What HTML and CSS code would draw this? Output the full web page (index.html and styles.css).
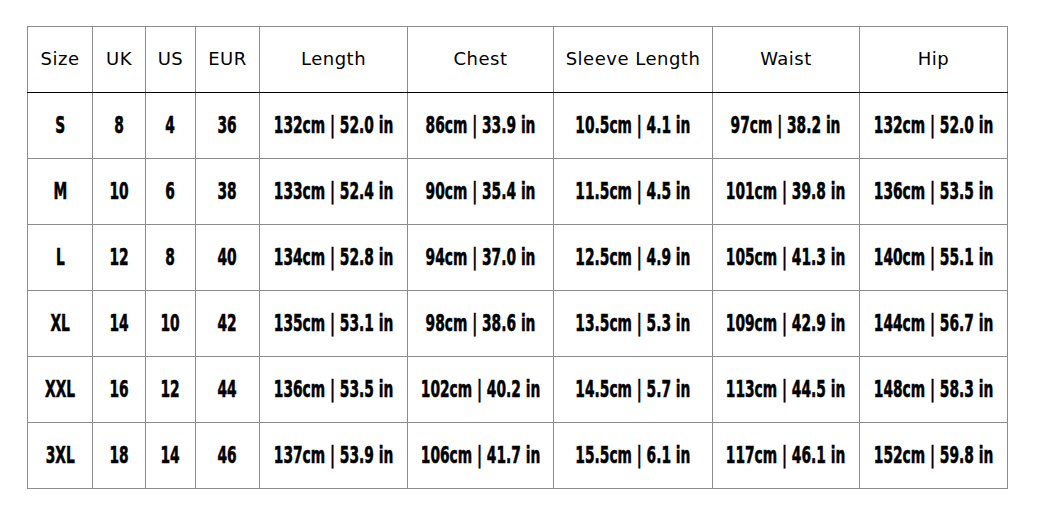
FILE: index.html
```html
<!DOCTYPE html>
<html>
<head>
<meta charset="utf-8">
<link rel="stylesheet" href="styles.css">
</head>
<body>
<table class="size-table">
  <colgroup>
    <col class="c-size"><col class="c-uk"><col class="c-us"><col class="c-eur">
    <col class="c-length"><col class="c-chest"><col class="c-sleeve"><col class="c-waist"><col class="c-hip">
  </colgroup>
  <thead>
    <tr><th>Size</th><th>UK</th><th>US</th><th>EUR</th><th>Length</th><th>Chest</th><th>Sleeve Length</th><th>Waist</th><th>Hip</th></tr>
  </thead>
  <tbody>
    <tr><td><span>S</span></td><td><span>8</span></td><td><span>4</span></td><td><span>36</span></td><td><span>132cm | 52.0 in</span></td><td><span>86cm | 33.9 in</span></td><td><span>10.5cm | 4.1 in</span></td><td><span>97cm | 38.2 in</span></td><td><span>132cm | 52.0 in</span></td></tr>
    <tr><td><span>M</span></td><td><span>10</span></td><td><span>6</span></td><td><span>38</span></td><td><span>133cm | 52.4 in</span></td><td><span>90cm | 35.4 in</span></td><td><span>11.5cm | 4.5 in</span></td><td><span>101cm | 39.8 in</span></td><td><span>136cm | 53.5 in</span></td></tr>
    <tr><td><span>L</span></td><td><span>12</span></td><td><span>8</span></td><td><span>40</span></td><td><span>134cm | 52.8 in</span></td><td><span>94cm | 37.0 in</span></td><td><span>12.5cm | 4.9 in</span></td><td><span>105cm | 41.3 in</span></td><td><span>140cm | 55.1 in</span></td></tr>
    <tr><td><span>XL</span></td><td><span>14</span></td><td><span>10</span></td><td><span>42</span></td><td><span>135cm | 53.1 in</span></td><td><span>98cm | 38.6 in</span></td><td><span>13.5cm | 5.3 in</span></td><td><span>109cm | 42.9 in</span></td><td><span>144cm | 56.7 in</span></td></tr>
    <tr><td><span>XXL</span></td><td><span>16</span></td><td><span>12</span></td><td><span>44</span></td><td><span>136cm | 53.5 in</span></td><td><span>102cm | 40.2 in</span></td><td><span>14.5cm | 5.7 in</span></td><td><span>113cm | 44.5 in</span></td><td><span>148cm | 58.3 in</span></td></tr>
    <tr><td><span>3XL</span></td><td><span>18</span></td><td><span>14</span></td><td><span>46</span></td><td><span>137cm | 53.9 in</span></td><td><span>106cm | 41.7 in</span></td><td><span>15.5cm | 6.1 in</span></td><td><span>117cm | 46.1 in</span></td><td><span>152cm | 59.8 in</span></td></tr>
  </tbody>
</table>
</body>
</html>
```
FILE: styles.css
```css
html, body {
  margin: 0;
  background: #fff;
}
body {
  padding: 26px 0 0 27px;
}
.size-table {
  border-collapse: collapse;
  table-layout: fixed;
  width: 980px;
}
.c-size { width: 65px; }
.c-uk { width: 53px; }
.c-us { width: 50px; }
.c-eur { width: 64px; }
.c-length { width: 148px; }
.c-chest { width: 146px; }
.c-sleeve { width: 159px; }
.c-waist { width: 147px; }
.c-hip { width: 148px; }
.size-table th,
.size-table td {
  border: 1px solid #8c8c8c;
  padding: 0;
  text-align: center;
  vertical-align: middle;
  color: #000;
}
.size-table th {
  height: 63px;
  padding-bottom: 2px;
  font-family: "DejaVu Sans", sans-serif;
  font-weight: normal;
  font-size: 18px;
  letter-spacing: 0.5px;
  border-bottom: 1px solid #000;
}
.size-table td {
  height: 64px;
  padding-bottom: 1px;
  font-family: "DejaVu Sans", sans-serif;
  font-weight: bold;
  font-size: 23px;
  white-space: nowrap;
}
.size-table td span {
  display: inline-block;
  margin: 0 -60px;
  transform: scaleX(0.6);
  transform-origin: center;
  -webkit-text-stroke: 0.6px #000;
}
```
